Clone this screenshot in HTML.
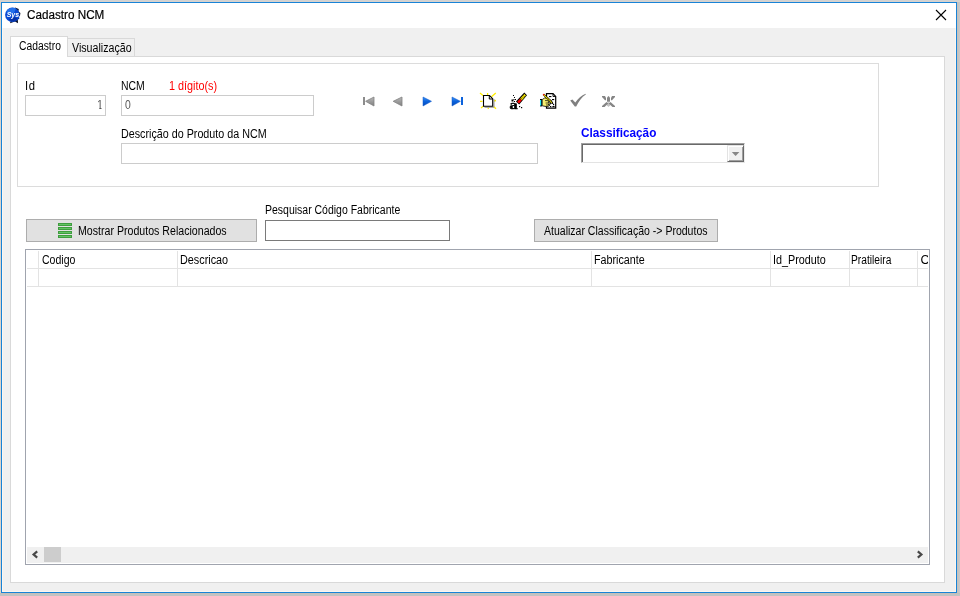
<!DOCTYPE html>
<html lang="pt-BR">
<head>
<meta charset="utf-8">
<title>Cadastro NCM</title>
<style>
*{box-sizing:border-box;margin:0;padding:0}
html,body{width:960px;height:596px;overflow:hidden;background:#c5c5c5;}
body{position:relative;font-family:"Liberation Sans",sans-serif;font-size:11px;color:#000;}
.abs{position:absolute}
#all{position:absolute;left:0;top:0;width:960px;height:596px;}
#txt{position:absolute;left:0;top:0;width:960px;height:596px;will-change:opacity;}
#frame{position:absolute;left:1px;top:2px;width:956px;height:591px;background:#f0f0f0;border:1px solid #1883d7;box-shadow:inset 0 0 0 1px #fcf6f0;}
#title{position:absolute;left:2px;top:3px;width:954px;height:25px;background:#fff;}
.cap{position:absolute;top:7px;-webkit-text-stroke-width:.2px;font-size:12px;line-height:16px;white-space:nowrap;color:#000;transform-origin:0 0;}
.t{position:absolute;white-space:nowrap;line-height:13px;font-size:12.5px;transform-origin:0 0;-webkit-text-stroke-width:0;}
.inp{position:absolute;background:#fff;border:1px solid #cccccc;}
.btn{position:absolute;background:#e1e1e1;border:1px solid #adadad;}
.box{position:absolute;border:1px solid #dcdcdc;}
.vl{position:absolute;width:1px;background:#e3e3e3;}
.hl{position:absolute;height:1px;background:#e3e3e3;}
</style>
</head>
<body>
<div id="all">
<div class="abs" style="left:0;top:0;width:960px;height:2px;background:linear-gradient(#d2d2d2 50%,#d8d3ce 50%)"></div>
<div class="abs" style="left:0;top:0;width:1px;height:593px;background:#dad3cc"></div>
<div class="abs" style="left:957px;top:2px;width:3px;height:594px;background:linear-gradient(90deg,#c8c1ba 33%,#c4c4c4 33%,#c4c4c4 66%,#c8c8c8 66%)"></div>
<div class="abs" style="left:0;top:593px;width:960px;height:3px;background:linear-gradient(#c6bfb8 33%,#c2c2c2 33%)"></div>
<div id="frame"></div>
<div id="title"></div>
<!-- app icon -->
<svg class="abs" style="left:4px;top:5px;will-change:opacity" width="20" height="20" viewBox="4 5 20 20">
  <path d="M15 7.4 L18.8 9 L18.4 11.6 L20.4 13 L20 15.8 L18.4 16.2 L19.4 18.8 L17.8 19.6 L18 23.2 L15 21.6 L10 23.2 Z" fill="#0a0f24"/>
  <circle cx="12.4" cy="14.8" r="7.3" fill="#0b49d2"/>
  <path d="M6.4 11.5 A7.3 7.3 0 0 1 16 8.4 L14 13 L8 15 Z" fill="#2f7df2" opacity=".75"/>
  <path d="M9 19.5 L14 17 L17.5 18.5 L15.5 21 L11 21.6 Z" fill="#062c9a" opacity=".8"/>
  <text transform="translate(6.7 17.2) scale(.92 1)" font-family="Liberation Sans, sans-serif" font-size="7.6" font-weight="bold" font-style="italic" fill="#fff">Sys</text>
</svg>
<svg class="abs" style="left:935px;top:9px" width="12" height="12" viewBox="0 0 12 12"><path d="M1 1 L11 11 M11 1 L1 11" stroke="#000" stroke-width="1.1" fill="none"/></svg>

<!-- tab control -->
<div class="box" style="left:10px;top:56px;width:935px;height:527px;background:#fff;border-color:#d9d9d9"></div>
<div class="box" style="left:67px;top:38px;width:68px;height:19px;background:#f0f0f0;border-color:#d9d9d9"></div>
<div class="box" style="left:10px;top:36px;width:58px;height:21px;background:#fff;border-color:#d9d9d9;border-bottom:none"></div>

<!-- group box -->
<div class="box" style="left:17px;top:63px;width:862px;height:124px;border-color:#dcdcdc"></div>
<div class="inp" style="left:25px;top:95px;width:81px;height:21px"></div>
<div class="inp" style="left:121px;top:95px;width:193px;height:21px"></div>
<div class="inp" style="left:121px;top:143px;width:417px;height:21px"></div>

<!-- navigator icons -->
<svg class="abs" style="left:360px;top:90px;will-change:opacity" width="260" height="22" viewBox="360 90 260 22">
  <defs>
    <linearGradient id="gg" x1="0" y1="0" x2="0" y2="1"><stop offset="0" stop-color="#b8b8b8"/><stop offset="1" stop-color="#808080"/></linearGradient>
    <linearGradient id="gb" x1="0" y1="0" x2="0" y2="1"><stop offset="0" stop-color="#3f93f5"/><stop offset=".5" stop-color="#0b62dc"/><stop offset="1" stop-color="#064bb8"/></linearGradient>
  </defs>
  <!-- first -->
  <rect x="363" y="97" width="2" height="8" fill="#8c8c8c"/>
  <path d="M374 97 L374 106 L365.6 101.3 Z" fill="url(#gg)" stroke="#828282" stroke-width=".8"/>
  <!-- prev -->
  <path d="M402 97 L402 106 L393.2 101.3 Z" fill="url(#gg)" stroke="#828282" stroke-width=".8"/>
  <!-- next -->
  <path d="M423 97 L423 106 L431.5 101.3 Z" fill="url(#gb)" stroke="#0a55c8" stroke-width=".5"/>
  <!-- last -->
  <path d="M452 97 L452 106 L460.4 101.3 Z" fill="url(#gb)" stroke="#0a55c8" stroke-width=".5"/>
  <rect x="461" y="97" width="2" height="8" fill="#0b62dc"/>

  <!-- new document -->
  <g stroke="#ffee00" stroke-width="1.3" stroke-linecap="butt">
    <path d="M480 93 L483 95.5 M487.6 93 L487.6 95 M495.8 93 L491.5 96.8 M480 101.3 L482.5 101.3 M494 101 L496 100.5 M481 108 L483.5 106 M488 107.5 L488.5 109 M493.5 106.5 L496 108.8"/>
  </g>
  <path d="M494 99 L494 107.3 L484.5 107.3" stroke="#9a9a9a" stroke-width="1" fill="none"/>
  <path d="M483.5 95.5 L489.5 95.5 L492.7 98.7 L492.7 106.2 L483.5 106.2 Z" fill="#fff" stroke="#000" stroke-width="1.1"/>
  <path d="M489.3 95.7 L489.3 99 L492.5 99" stroke="#000" stroke-width="1" fill="none"/>

  <!-- eraser -->
  <path d="M515.9 101.6 L524.3 92.6 L527 95.2 L519.2 104.6 Z" fill="#000"/>
  <path d="M520.2 98.6 L524.4 94 L525.9 95.4 L521.9 100.2 Z" fill="#ffee00"/>
  <path d="M517.2 101.7 L520 98.8 L521.7 100.4 L519 103.4 Z" fill="#f00"/>
  <path d="M521 97.8 L522.6 99.4 M522.1 96.6 L523.7 98.2 M523.2 95.4 L524.8 97" stroke="#000" stroke-width=".5"/>
  <text transform="translate(509.6 108.5) scale(1.25 1)" font-family="Liberation Serif, serif" font-weight="bold" font-size="13" fill="#000" stroke="#000" stroke-width=".5">a</text>
  <g fill="#000">
    <rect x="513" y="95" width="1" height="1"/><rect x="514" y="97" width="1" height="1"/><rect x="515" y="99" width="1" height="1"/>
    <rect x="511.5" y="99.5" width="2" height="2"/><rect x="513.5" y="99" width="1" height="1"/><rect x="514" y="101" width="1" height="1"/>
    <rect x="519" y="106" width="1.2" height="1.2"/><rect x="521" y="107" width="1.2" height="1.2"/>
  </g>

  <!-- edit (doc + hand + pencil) -->
  <path d="M546.5 93.6 L553 93.6 L555.7 96.4 L555.7 108.2 L546.5 108.2 Z" fill="#fff" stroke="#000" stroke-width="1.2"/>
  <path d="M553 93.8 L553 96.5 L555.6 96.5" stroke="#000" stroke-width=".9" fill="none"/>
  <g fill="#000">
    <rect x="549" y="96" width="2.4" height="1.1"/><rect x="552" y="99" width="2.2" height="1.1"/>
    <rect x="553" y="104" width="1.2" height="1.2"/>
    <rect x="550" y="106" width="1.3" height="1.2"/><rect x="552.4" y="106" width="2.2" height="1.2"/>
  </g>
  <rect x="540" y="99" width="2" height="7.4" fill="#000"/><rect x="540" y="100" width="1.3" height="5.6" fill="#20e8ff"/>
  <path d="M542.2 99.6 L544.6 98 L548.5 98.2 L549.6 99.6 L551.6 100.6 L551.4 101.6 L548.4 101.4 L548.4 102.6 L550.6 103 L550.4 104.2 L548.2 104.2 L549.6 105 L549.2 106 L546.6 106.6 L542.2 105.8 Z" fill="#f6f070" stroke="#000" stroke-width=".8"/>
  <path d="M545 100.6 L549 100.6 M545.6 103 L548.6 103 M546 105 L548.6 105" stroke="#000" stroke-width=".7"/>
  <path d="M542.8 95 L544.2 93.7 L552.8 102 L553.5 104.3 L551.2 103.4 Z" fill="#000"/>
  <path d="M543.8 94.8 L551.8 102.6" stroke="#ffee00" stroke-width="1.3" stroke-dasharray="1.3 .4"/>
  <rect x="542.9" y="93.9" width="1.4" height="1.4" fill="#f01010"/>

  <!-- check (disabled) -->
  <path d="M570.2 100.4 L572.4 99.4 L575.3 102.6 C578 98.6 581.5 95.4 585.6 93.8 L585.8 94.6 C581.6 97.4 578.6 101.6 576.2 106.6 L574.8 106.6 Z" fill="#808080"/>

  <!-- cancel (disabled) -->
  <g fill="#858585">
    <path d="M602 96 L605 96 L606 98 L606 100.3 L605 100.3 L602 97 Z"/>
    <path d="M615 96 L612 96 L611 98 L611 100.3 L612 100.3 L615 97 Z"/>
    <path d="M607 97.5 L608.5 96 L610 97.5 L610 101.8 L607 101.8 Z"/>
    <path d="M606.5 102 L608.3 103.6 L604.5 107 L602 107 L602 106 Z"/>
    <path d="M610.5 102 L608.7 103.6 L612.5 107 L615 107 L615 106 Z"/>
    <path d="M607 103 L608.5 102 L610 103 L610 105.5 L608.5 107 L607 105.5 Z" opacity=".5"/>
  </g>
</svg>

<!-- classificacao -->
<div class="abs" style="left:581px;top:143px;width:164px;height:20px;background:#fff;border:1px solid;border-color:#a0a0a0 #ececec #e3e3e3 #a0a0a0;box-shadow:inset 1px 1px 0 #696969"></div>
<div class="abs" style="left:727px;top:145px;width:17px;height:17px;background:#f0f0f0;border:1px solid;border-color:#e3e3e3 #696969 #696969 #e3e3e3;box-shadow:inset 1px 1px 0 #fff,inset -1px -1px 0 #a0a0a0"></div>
<svg class="abs" style="left:731px;top:151px" width="10" height="6" viewBox="0 0 10 6"><path d="M0.8 1 L8.4 1 L4.6 5 Z" fill="#868686"/></svg>

<!-- middle row -->
<div class="btn" style="left:26px;top:219px;width:231px;height:23px"></div>
<svg class="abs" style="left:58px;top:223px" width="14" height="15" viewBox="0 0 14 15">
  <g fill="#3f9c3f"><rect x="0" y="0" width="14" height="3"/><rect x="0" y="4" width="14" height="3"/><rect x="0" y="8" width="14" height="3"/><rect x="0" y="12" width="14" height="3"/></g>
  <g fill="#62c462"><rect x="1" y="1" width="12" height="1"/><rect x="1" y="5" width="12" height="1"/><rect x="1" y="9" width="12" height="1"/><rect x="1" y="13" width="12" height="1"/></g>
</svg>
<div class="inp" style="left:265px;top:220px;width:185px;height:21px;border-color:#7a7a7a"></div>
<div class="btn" style="left:534px;top:219px;width:184px;height:23px"></div>

<!-- grid -->
<div class="abs" style="left:25px;top:249px;width:905px;height:316px;background:#fff;border:1px solid #a0a4ae"></div>
<div class="hl" style="left:27px;top:268px;width:901px"></div>
<div class="hl" style="left:27px;top:286px;width:901px"></div>
<div class="vl" style="left:38px;top:251px;height:36px"></div>
<div class="vl" style="left:177px;top:251px;height:36px"></div>
<div class="vl" style="left:591px;top:251px;height:36px"></div>
<div class="vl" style="left:770px;top:251px;height:36px"></div>
<div class="vl" style="left:849px;top:251px;height:36px"></div>
<div class="vl" style="left:917px;top:251px;height:36px"></div>
<!-- scrollbar -->
<div class="abs" style="left:27px;top:547px;width:901px;height:16px;background:#f0f0f0"></div>
<div class="abs" style="left:44px;top:547px;width:17px;height:15px;background:#cdcdcd"></div>
<svg class="abs" style="left:31px;top:550px" width="8" height="9" viewBox="0 0 8 9"><path d="M6.2 1.4 L2.6 4.5 L6.2 7.6" stroke="#484848" stroke-width="2.2" fill="none"/></svg>
<svg class="abs" style="left:916px;top:550px" width="8" height="9" viewBox="0 0 8 9"><path d="M1.8 1.4 L5.4 4.5 L1.8 7.6" stroke="#484848" stroke-width="2.2" fill="none"/></svg>
</div>
<!-- text layer -->
<div id="txt">
<div class="cap" style="left:26.8px;transform:scaleX(0.975)">Cadastro NCM</div>
<div class="t" style="left:18.5px;top:40px;transform:scaleX(0.826)">Cadastro</div>
<div class="t" style="left:71.6px;top:42px;transform:scaleX(0.852)">Visualização</div>
<div class="t" style="left:24.8px;top:80px;letter-spacing:.7px;transform:scaleX(0.900)">Id</div>
<div class="t" style="left:96.6px;top:99px;color:#585858;transform:scaleX(0.850);clip-path:polygon(0 0,7px 0,7px 9px,5.3px 9px,5.3px 13px,2.7px 13px,2.7px 9px,0 9px)">1</div>
<div class="t" style="left:120.8px;top:80px;transform:scaleX(0.835)">NCM</div>
<div class="t" style="left:168.6px;top:80px;color:#f00;transform:scaleX(0.866)">1 dígito(s)</div>
<div class="t" style="left:124.5px;top:99px;color:#585858;transform:scaleX(0.830)">0</div>
<div class="t" style="left:120.5px;top:128px;transform:scaleX(0.859)">Descrição do Produto da NCM</div>
<div class="t" style="left:581.2px;top:126.5px;color:#00f;font-weight:bold;transform:scaleX(0.943)">Classificação</div>
<div class="t" style="left:77.9px;top:224.5px;transform:scaleX(0.849)">Mostrar Produtos Relacionados</div>
<div class="t" style="left:264.6px;top:204px;transform:scaleX(0.839)">Pesquisar Código Fabricante</div>
<div class="t" style="left:544.1px;top:224.6px;transform:scaleX(0.842)">Atualizar Classificação -&gt; Produtos</div>
<div class="t" style="left:41.7px;top:254.3px;transform:scaleX(0.844)">Codigo</div>
<div class="t" style="left:180.4px;top:254.3px;transform:scaleX(0.866)">Descricao</div>
<div class="t" style="left:593.9px;top:254.3px;transform:scaleX(0.859)">Fabricante</div>
<div class="t" style="left:772.6px;top:254.3px;transform:scaleX(0.863)">Id_Produto</div>
<div class="t" style="left:851.2px;top:254.3px;transform:scaleX(0.818)">Pratileira</div>
<div class="t" style="left:920.5px;top:254px;width:7.5px;overflow:hidden">C</div>
</div>
</body>
</html>
